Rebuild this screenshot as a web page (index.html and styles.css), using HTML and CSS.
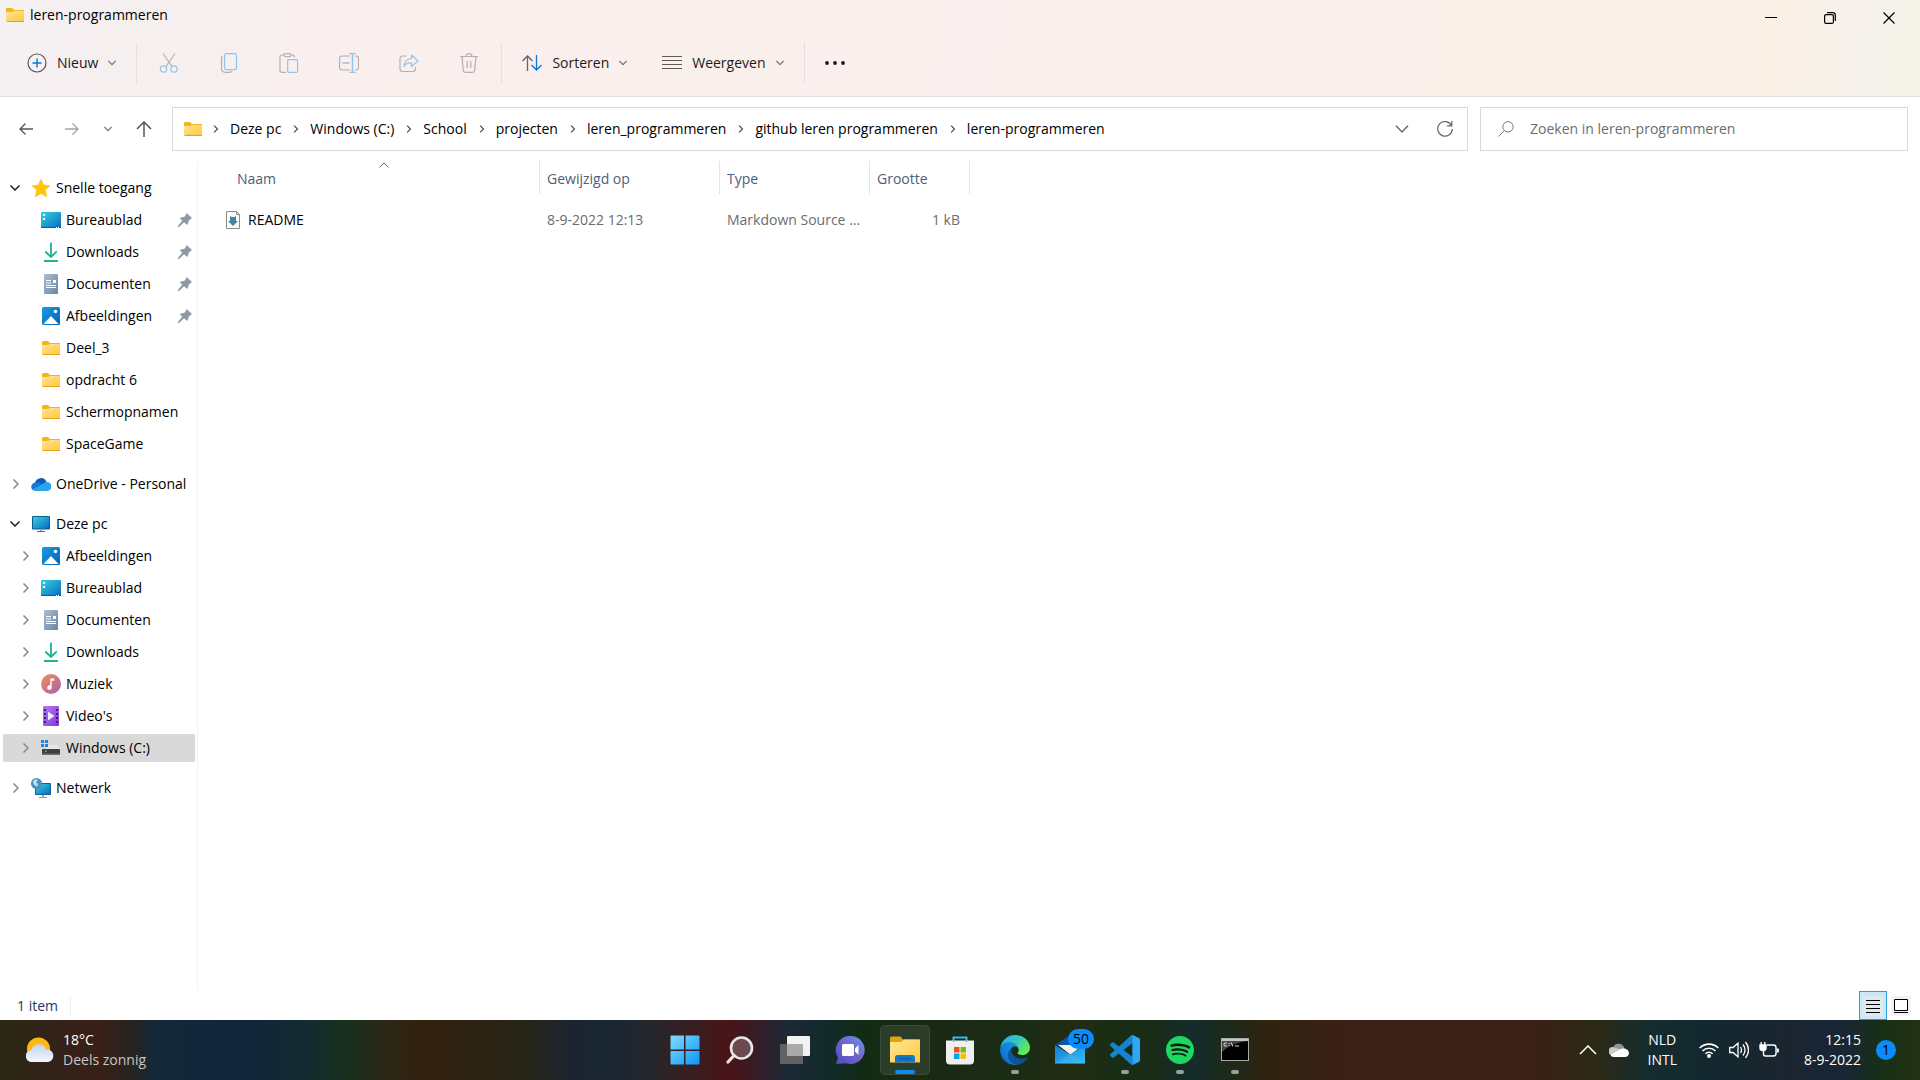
FILE: index.html
```html
<!DOCTYPE html>
<html lang="nl">
<head>
<meta charset="utf-8">
<meta name="viewport" content="width=device-width, initial-scale=1">
<title>leren-programmeren</title>
<link rel="stylesheet" href="styles.css">
</head>
<body>
<svg class="sprite" aria-hidden="true">
  <defs>
    <linearGradient id="g-folder" x1="0" y1="0" x2="1" y2="1"><stop offset="0" stop-color="#ffe69a"/><stop offset="1" stop-color="#ffc93a"/></linearGradient>
    <linearGradient id="g-desk" x1="0" y1="0" x2="1" y2="1"><stop offset="0" stop-color="#34d3e0"/><stop offset="1" stop-color="#0b68c0"/></linearGradient>
    <linearGradient id="g-doc" x1="0" y1="0" x2="1" y2="1"><stop offset="0" stop-color="#adbdd2"/><stop offset="1" stop-color="#6b84a6"/></linearGradient>
    <linearGradient id="g-pic" x1="0" y1="0" x2="1" y2="1"><stop offset="0" stop-color="#1a9be8"/><stop offset="1" stop-color="#0662b4"/></linearGradient>
    <linearGradient id="g-music" x1="0" y1="0" x2="1" y2="1"><stop offset="0" stop-color="#f2904e"/><stop offset="1" stop-color="#a65fb4"/></linearGradient>
    <linearGradient id="g-video" x1="0" y1="0" x2="1" y2="1"><stop offset="0" stop-color="#b679f0"/><stop offset="1" stop-color="#7f36e0"/></linearGradient>
    <linearGradient id="g-win" x1="0" y1="0" x2="1" y2="1"><stop offset="0" stop-color="#7fdcff"/><stop offset="1" stop-color="#0d96f8"/></linearGradient>
    <linearGradient id="g-chat" x1="0" y1="1" x2="1" y2="0"><stop offset="0" stop-color="#4b50bf"/><stop offset=".55" stop-color="#7663cc"/><stop offset="1" stop-color="#5fa0e8"/></linearGradient>
    <linearGradient id="g-edge1" x1="0" y1="0" x2="1" y2="0"><stop offset="0" stop-color="#0c59a4"/><stop offset="1" stop-color="#114a8b"/></linearGradient>
    <linearGradient id="g-edge2" x1="1" y1="0" x2="0" y2="1"><stop offset="0" stop-color="#1b9de2"/><stop offset=".6" stop-color="#0f7fd6"/><stop offset="1" stop-color="#0a5bb5"/></linearGradient>
    <linearGradient id="g-edge3" x1="0" y1="0" x2="1" y2=".6"><stop offset="0" stop-color="#2ba7ea"/><stop offset=".5" stop-color="#2fc5c4"/><stop offset="1" stop-color="#66eb55"/></linearGradient>
    <linearGradient id="g-cloud" x1="0" y1="0" x2="0" y2="1"><stop offset="0" stop-color="#c2d3f3"/><stop offset="1" stop-color="#f4f7fd"/></linearGradient>
    <linearGradient id="g-mail" x1="0" y1="0" x2="1" y2="1"><stop offset="0" stop-color="#1478d4"/><stop offset="1" stop-color="#35c1f5"/></linearGradient>
  </defs>
  <symbol id="folder" viewBox="0 0 18 14"><path d="M0 1q0-1 1-1h5l2 2h10v11H0z" fill="#f4b41c"/><path d="M0 4h6l2-1h10v10H0z" fill="url(#g-folder)"/><path d="M0 13h18v1H1z" fill="#e3a31b"/></symbol>
  <symbol id="star" viewBox="0 0 18 18"><path d="M9 0l2.700 6 6.300.700-4.700 4.300 1.400 6.800L9 14.500l-5.700 3.300L4.700 11 0 6.700 6.300 6z" fill="#ffc40c" stroke="#ffc40c" stroke-width=".6" stroke-linejoin="round"/></symbol>
  <symbol id="desktop" viewBox="0 0 20 16"><rect width="20" height="16" rx="1" fill="url(#g-desk)"/><path d="M0 15h20v1H0z" fill="#0a5a9e"/><path d="M2 2h2v2H2zM2 6h2v2H2zM15 15h1v1h-1zM17 15h1v1h-1z" fill="#fff"/></symbol>
  <symbol id="download" viewBox="0 0 14 20"><path d="M7 .5v14M1.300 9.500L7 15l5.700-5.500M0 19h14" fill="none" stroke="#22b192" stroke-width="1.800"/></symbol>
  <symbol id="document" viewBox="0 0 14 20"><rect width="14" height="20" rx="1" fill="url(#g-doc)"/><path d="M2 6h5v1H2zM2 8.500h5v1H2zM2 11h10v1H2zM2 13h10v1H2zM9 6h3v3H9z" fill="#fff"/></symbol>
  <symbol id="picture" viewBox="0 0 18 18"><rect width="18" height="18" rx="1.500" fill="url(#g-pic)"/><path d="M1.500 17L9 9l7.500 8z" fill="#fff"/><circle cx="13.500" cy="4.500" r="1.700" fill="#fff"/></symbol>
  <symbol id="pin" viewBox="0 0 14 14"><path d="M8.500 0L14 5 11 7.200 9.500 12 6 9.200 1 14H0v-1l4.300-5.500L1.500 5 7 3.500z" fill="#8d99a5"/></symbol>
  <symbol id="onedrive" viewBox="0 0 20 13"><path d="M4 5a6 6 0 0 1 11.500-1L9 8z" fill="#0a5fb8"/><path d="M4 4.500a4.500 4.500 0 0 0-2.500 7.500L12 6.500Q8 3.800 4 4.500z" fill="#1379d1"/><path d="M12 6l3.500-2a4.500 4.500 0 0 1 1 9H4.500a4 4 0 0 1-3-1.200z" fill="#29a3ea"/></symbol>
  <symbol id="pc" viewBox="0 0 18 16"><rect width="18" height="13.500" rx=".8" fill="#0c5c90"/><rect x="1" y="1" width="16" height="11.500" fill="url(#g-desk)"/><path d="M8 13.500h2V15H8z" fill="#9aa7b0"/><path d="M5 15h8v1H5z" fill="#5e6b75"/></symbol>
  <symbol id="music" viewBox="0 0 20 20"><circle cx="10" cy="10" r="10" fill="url(#g-music)"/><path d="M9.300 4.500h4v2.200h-2.600v6.800a2.200 2.200 0 1 1-1.400-2z" fill="#fff"/></symbol>
  <symbol id="video" viewBox="0 0 16 20"><rect width="16" height="20" rx="1" fill="url(#g-video)"/><path d="M1 3h2v2H1zM1 7h2v2H1zM1 11h2v2H1zM1 15h2v2H1zM13 3h2v2h-2zM13 7h2v2h-2zM13 11h2v2h-2zM13 15h2v2h-2z" fill="#3f2368"/><path d="M5 5.500l6.500 4.500L5 14.500z" fill="#f1e8ff"/></symbol>
  <symbol id="drive" viewBox="0 0 20 16"><path d="M4 9l3-4h9l3 4z" fill="#e6e6e6"/><rect x="1" y="9" width="18" height="6" rx=".8" fill="#3e3e3e"/><path d="M1 13.500h18V15H1z" fill="#6d6d6d"/><path d="M4 10.500h1.500V12H4z" fill="#5bdc49"/><path d="M0 0h3v3H0zM4 0h3v3H4zM0 4h3v3H0zM4 4h3v3H4z" fill="#1689dc"/></symbol>
  <symbol id="network" viewBox="0 0 20 20"><rect x="4" y="5" width="16" height="12" rx=".8" fill="#0c6597"/><rect x="5" y="6" width="14" height="10" fill="url(#g-desk)"/><path d="M11 17h2v2h-2z" fill="#9aa7b0"/><path d="M8 19h8v1H8z" fill="#8b98a2"/><circle cx="5.500" cy="5.500" r="5.500" fill="#4990bb"/><path d="M2 3q3-3 5-1L5 4.500 7 6 6 9 2.500 6z" fill="#c3e0ef"/></symbol>
  <symbol id="chev-right" viewBox="0 0 8 10"><path d="M1.500.5L6 5 1.500 9.500" fill="none" stroke="currentColor" stroke-width="1.500"/></symbol>
  <symbol id="chev-down" viewBox="0 0 10 6"><path d="M.5.500L5 5 9.500.500" fill="none" stroke="currentColor" stroke-width="1.500"/></symbol>
</svg>

<div class="screen">
  <div class="window">
    <header class="chrome">
      <div class="titlebar">
        <svg class="i-folder"><use href="#folder"/></svg>
        <h1 class="title">leren-programmeren</h1>
        <div class="window-controls">
          <button class="win-btn" aria-label="Minimaliseren"><svg width="12" height="12" viewBox="0 0 12 12"><path d="M0 5.500h12" stroke="#000"/></svg></button>
          <button class="win-btn" aria-label="Verkleinen"><svg width="12" height="12" viewBox="0 0 12 12" fill="none" stroke="#000" stroke-width="1.200"><rect x=".6" y="2.600" width="8.800" height="8.800" rx="1.500"/><path d="M3 .7h5.800a2.500 2.500 0 0 1 2.500 2.500V9"/></svg></button>
          <button class="win-btn" aria-label="Sluiten"><svg width="12" height="12" viewBox="0 0 12 12"><path d="M.5.500l11 11M11.500.500l-11 11" stroke="#000" stroke-width="1.200"/></svg></button>
        </div>
      </div>
      <div class="toolbar">
        <button class="tool"><svg width="20" height="20" viewBox="0 0 20 20" fill="none"><circle cx="10" cy="10" r="9" stroke="#555" stroke-width="1.200"/><path d="M10 5.500v9M5.500 10h9" stroke="#0078d4" stroke-width="1.400"/></svg><span>Nieuw</span><svg class="i-caret"><use href="#chev-down"/></svg></button>
        <span class="rule"></span>
        <div class="tool-icons">
          <button class="icon-tool" aria-label="Knippen" disabled><svg width="20" height="20" viewBox="0 0 20 20" fill="none" stroke-width="1.200"><path d="M4 .5l9 13M16 .5L7 13.500" stroke="#b5b0b0"/><circle cx="4.500" cy="16" r="3.200" stroke="#92c3ea"/><circle cx="15" cy="16" r="3.200" stroke="#92c3ea"/></svg></button>
          <button class="icon-tool" aria-label="Kopiëren" disabled><svg width="20" height="20" viewBox="0 0 20 20" fill="none" stroke-width="1.200"><path d="M3.500 3Q2.500 3.500 2.500 5v10q0 4.300 4 4.300h4q2 0 2.700-1.300" stroke="#b5b0b0"/><rect x="5.500" y=".6" width="12" height="16" rx="2" stroke="#92c3ea"/></svg></button>
          <button class="icon-tool" aria-label="Plakken" disabled><svg width="20" height="20" viewBox="0 0 20 20" fill="none" stroke-width="1.200"><path d="M7 19.400H3q-2 0-2-2V4q0-2 2-2h2M12 2h1.500q2 0 2 2.500" stroke="#b5b0b0"/><rect x="5" y=".6" width="7" height="3" rx="1.500" stroke="#b5b0b0"/><rect x="8.600" y="6.600" width="10" height="12.800" rx="1.500" stroke="#92c3ea"/></svg></button>
          <button class="icon-tool" aria-label="Naam wijzigen" disabled><svg width="20" height="20" viewBox="0 0 20 20" fill="none" stroke-width="1.200"><path d="M11 3H3Q.6 3 .6 5.500v9Q.6 17 3 17h8M16 3h1q2.500 0 2.500 2.500v9q0 2.500-2.500 2.500h-1" stroke="#b5b0b0"/><path d="M13.500.5v19M10.500.600h6M10.500 19.400h6M3.500 10h7" stroke="#92c3ea" stroke-width="1.500"/></svg></button>
          <button class="icon-tool" aria-label="Delen" disabled><svg width="20" height="20" viewBox="0 0 20 20" fill="none" stroke-width="1.200" stroke-linejoin="round"><path d="M7.500 3H3.500Q1 3 1 5.500v10Q1 18.500 3.500 18.500H14q2.500 0 2.500-3V14" stroke="#b5b0b0"/><path d="M12.500 2l6.500 6-6.500 5.500V10Q7.500 9.500 5 13.500 5.500 6 12.500 5.500z" stroke="#92c3ea"/></svg></button>
          <button class="icon-tool" aria-label="Verwijderen" disabled><svg width="20" height="20" viewBox="0 0 20 20" fill="none" stroke="#b5b0b0" stroke-width="1.200"><path d="M1 3.500h18M3 3.500l1.300 14q.2 1.900 2.200 1.900h7q2 0 2.200-1.900L17 3.500M7 3.500Q7 .6 10 .6t3 2.900M8.200 8v7M11.800 8v7"/></svg></button>
        </div>
        <span class="rule"></span>
        <button class="tool"><svg width="20" height="16" viewBox="0 0 20 16" fill="none" stroke-width="1.300"><path d="M5.500 16V1M.5 6l5-5 5 5" stroke="#666"/><path d="M14.500 0v15M9.500 10l5 5 5-5" stroke="#0078d4"/></svg><span>Sorteren</span><svg class="i-caret"><use href="#chev-down"/></svg></button>
        <button class="tool tool-spaced"><svg width="20" height="14" viewBox="0 0 20 14"><path d="M0 .5h20M0 4.500h20M0 8.500h20M0 12.500h20" stroke="#5c5c5c" stroke-width="1.100"/></svg><span>Weergeven</span><svg class="i-caret"><use href="#chev-down"/></svg></button>
        <span class="rule"></span>
        <button class="tool" aria-label="Meer"><svg width="20" height="4" viewBox="0 0 20 4" fill="#1a1a1a"><circle cx="2" cy="2" r="1.900"/><circle cx="10" cy="2" r="1.900"/><circle cx="18" cy="2" r="1.900"/></svg></button>
      </div>
    </header>

    <div class="navbar">
      <div class="history">
        <button class="nav-btn" aria-label="Vorige"><svg width="14" height="12" viewBox="0 0 14 12" fill="none" stroke="#555" stroke-width="1.300"><path d="M14 6H1M6.500.5L1 6l5.500 5.500"/></svg></button>
        <button class="nav-btn" aria-label="Volgende"><svg width="14" height="12" viewBox="0 0 14 12" fill="none" stroke="#a3a3a3" stroke-width="1.300"><path d="M0 6h13M7.500.5L13 6l-5.500 5.500"/></svg></button>
        <button class="nav-btn nav-small" aria-label="Recente locaties"><svg class="i-caret"><use href="#chev-down"/></svg></button>
        <button class="nav-btn" aria-label="Omhoog"><svg width="16" height="16" viewBox="0 0 16 16" fill="none" stroke="#555" stroke-width="1.500"><path d="M8 16V1M1 8l7-7 7 7"/></svg></button>
      </div>
      <nav class="address" aria-label="Adresbalk">
        <svg class="i-folder"><use href="#folder"/></svg>
        <ol class="crumbs">
          <li><svg class="i-chev"><use href="#chev-right"/></svg><a href="#">Deze pc</a></li>
          <li><svg class="i-chev"><use href="#chev-right"/></svg><a href="#">Windows (C:)</a></li>
          <li><svg class="i-chev"><use href="#chev-right"/></svg><a href="#">School</a></li>
          <li><svg class="i-chev"><use href="#chev-right"/></svg><a href="#">projecten</a></li>
          <li><svg class="i-chev"><use href="#chev-right"/></svg><a href="#">leren_programmeren</a></li>
          <li><svg class="i-chev"><use href="#chev-right"/></svg><a href="#">github leren programmeren</a></li>
          <li><svg class="i-chev"><use href="#chev-right"/></svg><a href="#">leren-programmeren</a></li>
        </ol>
        <button class="addr-btn" aria-label="Eerdere locaties"><svg width="14" height="8" viewBox="0 0 14 8"><path d="M1 .8L7 7l6-6.200" fill="none" stroke="#666" stroke-width="1.400"/></svg></button>
        <button class="addr-btn" aria-label="Vernieuwen"><svg width="16" height="16" viewBox="0 0 16 16" fill="none" stroke="#666" stroke-width="1.200"><path d="M14.500 4.500A7.300 7.300 0 1 0 15.300 8M14.800 0v4.800H10"/></svg></button>
      </nav>
      <label class="search">
        <svg width="16" height="16" viewBox="0 0 16 16" fill="none" stroke="#777"><circle cx="10" cy="5.800" r="5.200"/><path d="M6.500 9.500L.5 15.500"/></svg>
        <input type="text" placeholder="Zoeken in leren-programmeren" aria-label="Zoeken in leren-programmeren">
      </label>
    </div>

    <div class="body">
      <aside class="sidebar">
        <ul class="tree">
          <li class="root open"><svg class="i-open"><use href="#chev-down"/></svg><span class="ico"><svg width="18" height="18"><use href="#star"/></svg></span><a href="#">Snelle toegang</a></li>
          <li><span class="ico"><svg width="20" height="16"><use href="#desktop"/></svg></span><a href="#">Bureaublad</a><svg class="i-pin"><use href="#pin"/></svg></li>
          <li><span class="ico"><svg width="14" height="20"><use href="#download"/></svg></span><a href="#">Downloads</a><svg class="i-pin"><use href="#pin"/></svg></li>
          <li><span class="ico"><svg width="14" height="20"><use href="#document"/></svg></span><a href="#">Documenten</a><svg class="i-pin"><use href="#pin"/></svg></li>
          <li><span class="ico"><svg width="18" height="18"><use href="#picture"/></svg></span><a href="#">Afbeeldingen</a><svg class="i-pin"><use href="#pin"/></svg></li>
          <li><span class="ico"><svg class="i-folder"><use href="#folder"/></svg></span><a href="#">Deel_3</a></li>
          <li><span class="ico"><svg class="i-folder"><use href="#folder"/></svg></span><a href="#">opdracht 6</a></li>
          <li><span class="ico"><svg class="i-folder"><use href="#folder"/></svg></span><a href="#">Schermopnamen</a></li>
          <li><span class="ico"><svg class="i-folder"><use href="#folder"/></svg></span><a href="#">SpaceGame</a></li>
        </ul>
        <ul class="tree">
          <li class="root"><svg class="i-closed"><use href="#chev-right"/></svg><span class="ico"><svg width="20" height="13"><use href="#onedrive"/></svg></span><a href="#">OneDrive - Personal</a></li>
        </ul>
        <ul class="tree">
          <li class="root open"><svg class="i-open"><use href="#chev-down"/></svg><span class="ico"><svg width="18" height="16"><use href="#pc"/></svg></span><a href="#">Deze pc</a></li>
          <li class="branch"><svg class="i-closed"><use href="#chev-right"/></svg><span class="ico"><svg width="18" height="18"><use href="#picture"/></svg></span><a href="#">Afbeeldingen</a></li>
          <li class="branch"><svg class="i-closed"><use href="#chev-right"/></svg><span class="ico"><svg width="20" height="16"><use href="#desktop"/></svg></span><a href="#">Bureaublad</a></li>
          <li class="branch"><svg class="i-closed"><use href="#chev-right"/></svg><span class="ico"><svg width="14" height="20"><use href="#document"/></svg></span><a href="#">Documenten</a></li>
          <li class="branch"><svg class="i-closed"><use href="#chev-right"/></svg><span class="ico"><svg width="14" height="20"><use href="#download"/></svg></span><a href="#">Downloads</a></li>
          <li class="branch"><svg class="i-closed"><use href="#chev-right"/></svg><span class="ico"><svg width="20" height="20"><use href="#music"/></svg></span><a href="#">Muziek</a></li>
          <li class="branch"><svg class="i-closed"><use href="#chev-right"/></svg><span class="ico"><svg width="16" height="20"><use href="#video"/></svg></span><a href="#">Video's</a></li>
          <li class="branch selected"><svg class="i-closed"><use href="#chev-right"/></svg><span class="ico"><svg width="20" height="16"><use href="#drive"/></svg></span><a href="#">Windows (C:)</a></li>
        </ul>
        <ul class="tree">
          <li class="root"><svg class="i-closed"><use href="#chev-right"/></svg><span class="ico"><svg width="20" height="20"><use href="#network"/></svg></span><a href="#">Netwerk</a></li>
        </ul>
      </aside>

      <main class="content">
        <table class="files">
          <colgroup><col class="c-name"><col class="c-date"><col class="c-type"><col class="c-size"></colgroup>
          <thead>
            <tr>
              <th class="name" aria-sort="ascending">Naam<svg class="sort-mark" viewBox="0 0 10 6"><path d="M.5 5.500L5 1l4.500 4.500" fill="none" stroke="#666"/></svg></th>
              <th>Gewijzigd op</th>
              <th>Type</th>
              <th>Grootte</th>
            </tr>
          </thead>
          <tbody>
            <tr>
              <td class="name"><div class="file"><svg width="14" height="18" viewBox="0 0 14 18"><path d="M.5.500h10l3 3v14H.5z" fill="#fbfbfb" stroke="#8c8c8c"/><path d="M10.500.500v3h3" fill="none" stroke="#8c8c8c"/><path d="M4 5l1.500 1h3L10 5v5h2l-5 5-5-5h2z" fill="#3f87a6"/></svg><span>README</span></div></td>
              <td>8-9-2022 12:13</td>
              <td class="clip">Markdown Source File</td>
              <td class="size">1 kB</td>
            </tr>
          </tbody>
        </table>
      </main>
    </div>

    <footer class="status">
      <span class="count">1 item</span>
      <div class="views">
        <button class="view active" aria-label="Details"><svg width="20" height="20" viewBox="0 0 20 20"><rect width="20" height="20" rx="2" fill="#dfe9ee"/><path d="M3 4.500h14M3 8.500h14M3 12.500h14M3 16.500h14" stroke="#000"/></svg></button>
        <button class="view" aria-label="Grote pictogrammen"><svg width="20" height="20" viewBox="0 0 20 20"><rect width="20" height="20" rx="2" fill="#f3f3f3"/><path d="M3.500 3.500h13v11h-13zM3 16.500h14" fill="#fff" stroke="#000"/></svg></button>
      </div>
    </footer>
  </div>

  <div class="taskbar">
    <button class="weather">
      <svg width="28" height="26" viewBox="0 0 28 26"><circle cx="12.500" cy="12" r="11.500" fill="#fdb714"/><path d="M6 25a6 6 0 0 1-.5-12 7.500 7.500 0 0 1 14.500-.5A6.300 6.300 0 0 1 22 25z" fill="url(#g-cloud)"/></svg>
      <span class="lines"><span>18°C</span><span class="dim">Deels zonnig</span></span>
    </button>

    <div class="apps">
      <button class="app" aria-label="Start"><svg width="30" height="30" viewBox="0 0 30 30"><path d="M.5 1.500q0-1 1-1H14v14H.5zM15.500.500h13q1 0 1 1v13h-14zM.5 16H14v13.500H1.500q-1 0-1-1zM15.500 16h14v12.500q0 1-1 1h-13z" fill="url(#g-win)"/></svg></button>
      <button class="app" aria-label="Zoeken"><svg width="28" height="28" viewBox="0 0 28 28"><circle cx="15.500" cy="12" r="10.500" fill="#fff" fill-opacity=".22" stroke="#e6e6e8" stroke-width="2.600"/><path d="M8 19.500l-6 6.500" stroke="#e6e6e8" stroke-width="3.200" stroke-linecap="round"/></svg></button>
      <button class="app" aria-label="Taakweergave"><svg width="30" height="28" viewBox="0 0 30 28"><rect x="7" width="23" height="20" rx="1" fill="#f2f2f2"/><rect y="8" width="23" height="20" rx="1" fill="#626262"/><path d="M7 8h16v12H7z" fill="#aaa"/></svg></button>
      <button class="app" aria-label="Chat"><svg width="30" height="28" viewBox="0 0 30 28"><path d="M15.500 0a14 14 0 1 1-4.500 27.200L1 28l2-6.500A14 14 0 0 1 15.500 0z" fill="url(#g-chat)"/><rect x="7" y="8" width="12" height="12" rx="1.500" fill="#fff"/><path d="M20 12.500l3.500-3.500v10L20 15.500z" fill="#fff"/></svg></button>
      <button class="app current" aria-label="Verkenner"><svg width="30" height="28" viewBox="0 0 30 28"><path d="M0 2q0-1.500 1.500-1.500h9L13 3.500h15.500q1.500 0 1.500 1.500V9H0z" fill="#e2a30a"/><path d="M0 6h11l3-2.500h16V26.500H0z" fill="url(#g-folder)"/><path d="M5 26.500v-5q0-2.500 2.500-2.500h15q2.500 0 2.500 2.500v5z" fill="#1377c9"/><path d="M9 22.800h12" stroke="#074f8f"/></svg></button>
      <button class="app" aria-label="Microsoft Store"><svg width="30" height="30" viewBox="0 0 30 30"><path d="M8.500 7V2.500h13V7" fill="none" stroke="#35b8ef" stroke-width="2"/><path d="M1 5.500h28v20q0 4-4 4H5q-4 0-4-4z" fill="#efefef"/><path d="M9 12h5.500v5.500H9z" fill="#f25022"/><path d="M15.500 12H21v5.500h-5.500z" fill="#7fba00"/><path d="M9 18.500h5.500V24H9z" fill="#00a4ef"/><path d="M15.500 18.500H21V24h-5.500z" fill="#ffb900"/><path d="M8 5.500h1.500V7H8zM20.500 5.500H22V7h-1.500z" fill="#35b8ef"/></svg></button>
      <button class="app running" aria-label="Microsoft Edge"><svg width="30" height="30" viewBox="4 4 257 257"><path d="M235.680 195.460a93.730 93.730 0 0 1-10.540 4.710 101.870 101.870 0 0 1-35.900 6.460c-47.320 0-88.540-32.550-88.540-74.320A31.480 31.480 0 0 1 117.130 105c-42.800 1.800-53.800 46.400-53.800 72.530 0 73.880 68.090 81.370 82.760 81.370 7.910 0 19.840-2.300 27-4.560l1.310-.44a128.340 128.340 0 0 0 66.600-52.800 4 4 0 0 0-5.320-5.640z" fill="url(#g-edge1)"/><path d="M110.340 246.340A79.200 79.200 0 0 1 87.600 225a80.720 80.720 0 0 1 29.530-120c3.120-1.470 8.450-4.130 15.540-4a32.350 32.350 0 0 1 25.690 13 31.880 31.880 0 0 1 6.360 18.660c0-.21 24.460-79.600-80-79.600-43.900 0-80 41.660-80 78.210a130.150 130.150 0 0 0 12.110 56 128 128 0 0 0 156.380 67.110 75.550 75.550 0 0 1-62.780-8z" fill="url(#g-edge2)"/><path d="M156.940 153.780c-.81 1.050-3.300 2.500-3.300 5.660 0 2.610 1.700 5.120 4.720 7.230 14.380 10 41.490 8.680 41.560 8.680a59.560 59.560 0 0 0 30.270-8.350A61.380 61.380 0 0 0 260.480 114c.26-22.410-8-37.310-11.340-43.910-21.190-41.440-66.920-65.280-116.640-65.280a128 128 0 0 0-128 126.200c.48-36.540 36.800-66.050 80-66.050 3.500 0 23.460.34 42 10.070 16.340 8.580 24.900 18.940 30.850 29.210 6.180 10.670 7.280 24.150 7.280 29.520s-2.740 13.330-7.690 20.020z" fill="url(#g-edge3)"/></svg></button>
      <button class="app mail" aria-label="Mail, 50 nieuwe berichten"><svg width="30" height="30" viewBox="0 0 30 30"><path d="M0 10L15 0l15 10z" fill="#0f569f"/><path d="M3 10h24l-11 10z" fill="#f1f1f1"/><path d="M0 10l15 9.500L30 10v18.500H0z" fill="url(#g-mail)"/><path d="M0 28.500L15 19l15 9.500z" fill="#43c4f6" opacity=".4"/></svg><span class="badge">50</span></button>
      <button class="app running" aria-label="Visual Studio Code"><svg width="30" height="30" viewBox="0 0 24 24"><path d="M23.150 2.587L18.210.21a1.494 1.494 0 0 0-1.705.29l-9.460 8.630-4.120-3.128a.999.999 0 0 0-1.276.057L.327 7.261A1 1 0 0 0 .326 8.740L3.899 12 .326 15.260a1 1 0 0 0 .001 1.479L1.650 17.940a.999.999 0 0 0 1.276.057l4.120-3.128 9.460 8.630a1.492 1.492 0 0 0 1.704.29l4.942-2.377A1.500 1.500 0 0 0 24 20.060V3.939a1.500 1.500 0 0 0-.85-1.352zm-5.146 14.861L10.826 12l7.178-5.448v10.896z" fill="#1583d0"/><path d="M18 0l5.150 2.587A1.500 1.500 0 0 1 24 3.939V20.060a1.500 1.500 0 0 1-.85 1.350L18 23.900z" fill="#2da8f2"/></svg></button>
      <button class="app running" aria-label="Spotify"><svg width="28" height="28" viewBox="0 0 24 24"><circle cx="12" cy="12" r="11" fill="#0b1a0d"/><path d="M12 0C5.400 0 0 5.400 0 12s5.400 12 12 12 12-5.400 12-12S18.660 0 12 0zm5.521 17.340c-.24.359-.66.480-1.021.240-2.820-1.740-6.360-2.101-10.561-1.141-.418.122-.779-.179-.899-.539-.12-.421.180-.780.540-.9 4.560-1.021 8.520-.6 11.640 1.320.420.180.479.659.301 1.020zm1.440-3.300c-.301.420-.841.600-1.262.300-3.239-1.980-8.159-2.580-11.939-1.380-.479.120-1.020-.120-1.140-.6-.12-.48.120-1.021.600-1.141C9.600 9.900 15 10.561 18.720 12.840c.361.181.540.780.241 1.200zm.12-3.360C15.240 8.400 8.820 8.160 5.160 9.301c-.6.179-1.200-.181-1.380-.721-.18-.601.180-1.200.720-1.381 4.260-1.260 11.280-1.020 15.721 1.621.539.300.719 1.020.419 1.560-.299.421-1.020.599-1.559.300z" fill="#1ed760"/></svg></button>
      <button class="app running" aria-label="Opdrachtprompt"><svg width="28" height="24" viewBox="0 0 28 24"><rect x=".5" y=".5" width="27" height="22" fill="#000" stroke="#aaa"/><path d="M1 1h26v2H1z" fill="#c4c4c4"/><path d="M1 3h26Q10 5 1 14z" fill="#444"/><path d="M6 5H4Q3 5 3 6v1q0 1 1 1h2M8 5v1M8 7v1M10 4.500l2 4M14 8h4" fill="none" stroke="#ddd"/></svg></button>
    </div>

    <div class="tray">
      <button class="tray-btn" aria-label="Verborgen pictogrammen"><svg width="18" height="10" viewBox="0 0 18 10"><path d="M1 9l8-8 8 8" fill="none" stroke="#fff" stroke-width="1.500"/></svg></button>
      <button class="tray-btn" aria-label="OneDrive"><svg width="20" height="14" viewBox="0 0 20 14"><path d="M4 4.500a6 6 0 0 1 11-.5L17 9H1z" fill="#8e9698"/><path d="M1.200 11.500A4 4 0 0 1 5 4.500l7 2z" fill="#c8cccd"/><path d="M1.200 11.500L13 5.500Q19.500 5 20 10q-.5 4-4 4H5q-3 0-3.800-2.500z" fill="#fff"/></svg></button>
      <button class="tray-btn lang"><span class="lines"><span>NLD</span><span>INTL</span></span></button>
      <button class="tray-btn quick" aria-label="Netwerk, geluid en batterij">
        <svg width="20" height="16" viewBox="0 0 20 16" fill="none" stroke="#fff" stroke-width="1.600"><path d="M.7 6a13.200 13.200 0 0 1 18.600 0M3.500 9a9.200 9.200 0 0 1 13 0M6.400 11.800a5 5 0 0 1 7.200 0"/><circle cx="10" cy="14" r="1.200" fill="#fff"/></svg>
        <svg width="20" height="18" viewBox="0 0 20 18" fill="none" stroke="#fff" stroke-width="1.300"><path d="M.7 6.500v5H4l5 4.300V2.200L4 6.500zM11.500 6q2 3 0 6M14 3.500q4 5.500 0 11M16.500 1q6 8 0 16"/></svg>
        <svg width="20" height="18" viewBox="0 0 20 18" fill="none" stroke="#fff" stroke-width="1.400"><path d="M8 4h6.500q2.500 0 2.500 2.500v6q0 2.500-2.500 2.500h-8q-2 0-2-2V9"/><path d="M1 4h6v3q0 2.500-3 2.500T1 7zM2.200 1v3M5.800 1v3" fill="#fff"/><path d="M18.800 7.500v4" stroke-width="2"/></svg>
      </button>
      <button class="tray-btn clock"><span class="lines"><span>12:15</span><span>8-9-2022</span></span><span class="notice">1</span></button>
    </div>
  </div>
</div>
</body>
</html>
```

FILE: styles.css
```css
* {
  box-sizing: border-box;
}

body {
  margin: 0;
  font-family: "Open Sans", "Noto Sans", sans-serif;
  font-size: 14px;
  line-height: 20px;
  color: #000;
  background: #fff;
}

button {
  margin: 0;
  padding: 0;
  border: 0;
  background: none;
  font: inherit;
  color: inherit;
}

a {
  color: inherit;
  text-decoration: none;
}

ul,
ol {
  margin: 0;
  padding: 0;
  list-style: none;
}

svg {
  display: block;
  flex: none;
}

.sprite {
  position: absolute;
  width: 0;
  height: 0;
}

.screen {
  display: flex;
  flex-direction: column;
  min-height: 100vh;
}

.window {
  flex: 1;
  display: flex;
  flex-direction: column;
}

/* Shared icon sizes */
.i-folder {
  width: 18px;
  height: 14px;
}

.i-caret {
  width: 8px;
  height: 6px;
  color: #777;
}

.i-chev {
  width: 6px;
  height: 8px;
  color: #444;
}

/* Title bar and command bar */
.chrome {
  border-bottom: 1px solid #e5dbd9;
  background: linear-gradient(97deg, #f5f0f2 0%, #f8efef 13%, #faefed 25%, #faf0eb 38%, #faefee 50%, #faf0eb 70%, #faf0ea 88%, #faf0e6 92%, #f6f2eb 97%, #f5f2ea 100%);
}

.titlebar {
  display: flex;
  align-items: center;
  gap: 6px;
  height: 30px;
  padding-left: 6px;
}

.title {
  flex: 1;
  margin: 0;
  font-size: 14px;
  font-weight: 400;
}

.window-controls {
  display: flex;
  padding: 6px 2px 0 0;
}

.win-btn {
  display: grid;
  place-items: center;
  width: 59px;
  height: 28px;
}

.toolbar {
  display: flex;
  align-items: center;
  height: 66px;
  padding-left: 19px;
  color: #1a1a1a;
}

.tool {
  display: flex;
  align-items: center;
  gap: 10px;
  height: 40px;
  padding: 0 8px;
}

.tool-spaced {
  margin-left: 19px;
}

.rule {
  width: 1px;
  height: 40px;
  margin: 0 12px;
  background: #e6dddc;
}

.tool-icons {
  display: flex;
  gap: 20px;
}

.icon-tool {
  display: grid;
  place-items: center;
  width: 40px;
  height: 40px;
}

/* Navigation row */
.navbar {
  display: grid;
  grid-template-columns: 148px minmax(0, 106fr) minmax(0, 35fr);
  gap: 12px;
  padding: 10px 12px;
}

.history {
  display: flex;
  align-items: center;
  gap: 12px;
}

.nav-btn {
  display: grid;
  place-items: center;
  width: 28px;
  height: 40px;
}

.nav-btn:first-child {
  margin-right: 6px;
}

.nav-small {
  width: 20px;
}

.address {
  display: flex;
  align-items: center;
  gap: 11px;
  height: 44px;
  padding: 0 10px 0 11px;
  border: 1px solid #d9d9d9;
}

.crumbs {
  flex: 1;
  display: flex;
  min-width: 0;
  white-space: nowrap;
}

.crumbs li {
  display: flex;
  align-items: center;
  gap: 11px;
  margin-right: 12px;
}

.addr-btn {
  display: grid;
  place-items: center;
  width: 24px;
  height: 40px;
}

.addr-btn + .addr-btn {
  margin-left: 8px;
}

.search {
  display: flex;
  align-items: center;
  gap: 16px;
  height: 44px;
  padding: 0 17px;
  border: 1px solid #d9d9d9;
}

.search input {
  flex: 1;
  min-width: 0;
  padding: 0;
  border: 0;
  outline: 0;
  background: none;
  font: inherit;
}

.search input::placeholder {
  color: #6d6d6d;
  opacity: 1;
}

/* Folder tree and file list */
.body {
  flex: 1;
  display: flex;
}

.sidebar {
  display: flex;
  flex-direction: column;
  gap: 8px;
  width: 198px;
  padding: 13px 2px 8px 3px;
  border-right: 1px solid #f5f5f5;
}

.tree li {
  display: flex;
  align-items: center;
  height: 28px;
  margin-bottom: 4px;
  padding-left: 38px;
  border-radius: 2px;
  white-space: nowrap;
}

.tree .root {
  padding-left: 7px;
}

.tree .branch {
  padding-left: 19px;
}

.tree .selected {
  background: #d9d9d9;
}

.ico {
  display: grid;
  place-items: center;
  width: 20px;
  margin-right: 5px;
}

.i-open {
  width: 10px;
  height: 6px;
  margin-right: 11px;
  color: #222;
}

.i-closed {
  width: 8px;
  height: 10px;
  margin-right: 11px;
  color: #8a8a8a;
}

.root .i-closed {
  margin-left: 2px;
}

.i-pin {
  width: 14px;
  height: 14px;
  margin-left: auto;
  margin-right: 3px;
}

.content {
  flex: 1;
  min-width: 0;
}

.files {
  width: 772px;
  border-collapse: separate;
  border-spacing: 0;
  table-layout: fixed;
}

.c-name {
  width: 342px;
}

.c-date {
  width: 180px;
}

.c-type {
  width: 150px;
}

.c-size {
  width: 100px;
}

.files th {
  position: relative;
  height: 33px;
  padding: 2px 7px 0;
  border-right: 1px solid #e5e5e5;
  color: #4c607a;
  font-weight: 400;
  text-align: left;
}

.files th.name {
  padding-left: 39px;
}

.sort-mark {
  position: absolute;
  top: 1px;
  left: calc(50% + 10px);
  width: 10px;
  height: 6px;
}

.files td {
  height: 52px;
  padding: 0 7px;
  color: #6d6d6d;
}

.files td.name {
  padding-left: 28px;
  color: #000;
}

.file {
  display: flex;
  align-items: center;
  gap: 8px;
}

.files .clip {
  overflow: hidden;
  text-overflow: ellipsis;
  white-space: nowrap;
}

.files .size {
  padding-right: 10px;
  text-align: right;
}

/* Status bar */
.status {
  display: flex;
  align-items: center;
  justify-content: space-between;
  height: 29px;
  padding: 0 9px 0 17px;
  color: #1e395b;
}

.count {
  padding-right: 12px;
  border-right: 1px solid #f0f0f0;
}

.views {
  display: flex;
  gap: 4px;
}

.view {
  display: grid;
  place-items: center;
  height: 29px;
}

.view.active {
  width: 28px;
  border: 1px solid #26a0da;
  background: #cce8f6;
}

/* Taskbar */
.taskbar {
  display: grid;
  grid-template-columns: 1fr auto 1fr;
  align-items: center;
  height: 60px;
  color: #fff;
  background: linear-gradient(90deg, #2a2812 0%, #33221a 3%, #3a2016 5%, #242422 7%, #142838 8%, #12253c 13%, #142b30 16%, #17301c 18%, #2b2716 20%, #33210f 22%, #282416 27%, #1b2530 30%, #1a2635 32%, #26262a 34%, #4a1417 38%, #3c1a22 39%, #1c2836 41%, #132a2c 43%, #122b14 45%, #1b2914 49%, #1a2d14 53%, #232b14 56%, #172e14 58%, #1a2c18 60%, #142c2a 62%, #1d2a1a 64%, #30230f 66%, #3a2016 70%, #3a2016 80%, #2c2a14 83%, #142c30 86%, #14282f 89%, #1a2530 93%, #182636 96%, #163016 98%, #243014 100%);
}

.lines {
  display: flex;
  flex-direction: column;
}

.weather {
  display: flex;
  align-items: center;
  gap: 9px;
  padding-left: 26px;
  text-align: left;
}

.dim {
  color: #c8c6c4;
}

.apps {
  display: flex;
  gap: 5px;
}

.app {
  position: relative;
  display: grid;
  place-items: center;
  width: 50px;
  height: 50px;
  border: 1px solid transparent;
  border-radius: 5px;
}

.app.current {
  border-color: rgba(255, 255, 255, .08);
  background: rgba(255, 255, 255, .09);
}

.app.running::after,
.app.current::after {
  content: "";
  position: absolute;
  bottom: 0;
  left: 50%;
  width: 8px;
  height: 4px;
  border-radius: 2px;
  background: #9a9f98;
  transform: translateX(-50%);
}

.app.current::after {
  width: 20px;
  background: #0a8cf8;
}

.badge {
  position: absolute;
  top: 3px;
  right: 0;
  width: 26px;
  height: 20px;
  border-radius: 10px;
  background: #0a8cff;
  color: #000;
  text-align: center;
}

.tray {
  display: flex;
  justify-content: flex-end;
  align-items: center;
  padding-right: 24px;
}

.tray-btn {
  display: flex;
  align-items: center;
  padding: 0 6px;
}

.lang {
  padding: 0 22px 0 12px;
  text-align: center;
}

.quick {
  gap: 10px;
  padding: 0;
}

.clock {
  gap: 15px;
  padding: 0 0 0 25px;
  text-align: right;
}

.notice {
  width: 20px;
  height: 20px;
  border-radius: 50%;
  background: #0a8cff;
  color: #000;
  text-align: center;
}
```
